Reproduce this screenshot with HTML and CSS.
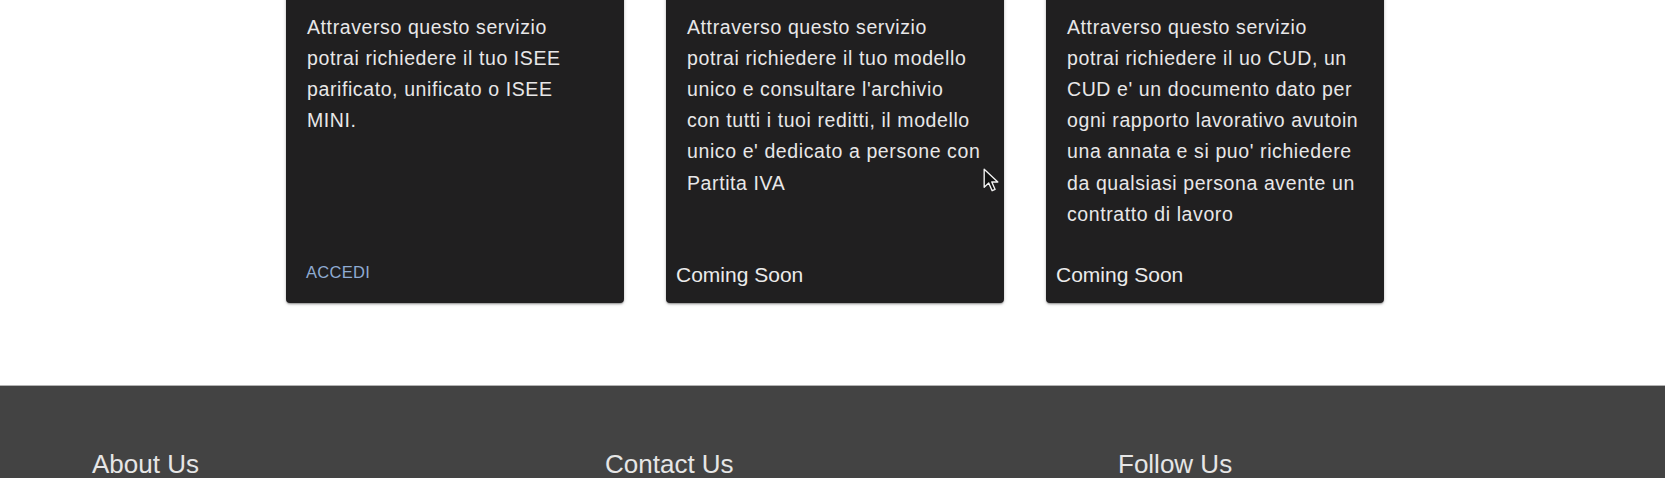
FILE: index.html
```html
<!DOCTYPE html>
<html lang="it">
<head>
<meta charset="utf-8">
<title>Servizi</title>
<link rel="stylesheet" href="styles.css">
</head>
<body>
  <main class="services">
    <div class="cards">
      <article class="card">
        <div class="card-body">
          <p class="card-text">Attraverso questo servizio<br>potrai richiedere il tuo ISEE<br>parificato, unificato o ISEE<br>MINI.</p>
        </div>
        <div class="card-actions">
          <a class="btn-text" href="#">Accedi</a>
        </div>
      </article>
      <article class="card">
        <div class="card-body">
          <p class="card-text">Attraverso questo servizio<br>potrai richiedere il tuo modello<br>unico e consultare l'archivio<br>con tutti i tuoi reditti, il modello<br>unico e' dedicato a persone con<br>Partita IVA</p>
        </div>
        <div class="card-actions">
          <span class="soon">Coming Soon</span>
        </div>
      </article>
      <article class="card">
        <div class="card-body">
          <p class="card-text">Attraverso questo servizio<br>potrai richiedere il uo CUD, un<br>CUD e' un documento dato per<br>ogni rapporto lavorativo avutoin<br>una annata e si puo' richiedere<br>da qualsiasi persona avente un<br>contratto di lavoro</p>
        </div>
        <div class="card-actions">
          <span class="soon">Coming Soon</span>
        </div>
      </article>
    </div>
  </main>
  <footer class="footer">
    <div class="footer-cols">
      <section class="footer-col"><h3 class="footer-title">About Us</h3></section>
      <section class="footer-col"><h3 class="footer-title">Contact Us</h3></section>
      <section class="footer-col"><h3 class="footer-title">Follow Us</h3></section>
    </div>
  </footer>
  <svg class="cursor" width="16" height="25" viewBox="0 0 14 22" aria-hidden="true">
    <path d="M1 1 L1 17 L5 13.2 L8 20 L10.6 18.9 L7.7 12.3 L13 12.3 Z" fill="#111" stroke="#f2f2f2" stroke-width="1.2" stroke-linejoin="round"/>
  </svg>
</body>
</html>
```

FILE: styles.css
```css
html {
  overflow: hidden;
}

body {
  margin: 0;
  background: #ffffff;
  font-family: "Liberation Sans", Arial, sans-serif;
  position: relative;
}

.services {
  margin-top: -12px;
  padding-bottom: 82px;
}

.cards {
  display: flex;
  gap: 42px;
  padding-left: 286px;
  align-items: stretch;
}

.card {
  width: 338px;
  display: flex;
  flex-direction: column;
  background: #201f20;
  border-radius: 4px;
  box-shadow: 0 2px 2px -1px rgba(0,0,0,0.25), 0 1px 2px 0 rgba(0,0,0,0.16), 0 1px 4px 0 rgba(0,0,0,0.14);
}

.card-body {
  flex: 1;
  padding: 23.5px 8px 33.1px 21px;
}

.card-text {
  margin: 0;
  font-family: "Liberation Sans", Arial, sans-serif;
  font-size: 19.5px;
  line-height: 31.2px;
  letter-spacing: 0.6px;
  color: #e8e7e8;
  white-space: nowrap;
}

.card-actions {
  display: flex;
  align-items: flex-end;
  padding: 0 9px 16px 10px;
}

.btn-text {
  display: inline-block;
  padding: 0 10px 3px;
  font-family: "Liberation Sans", Arial, sans-serif;
  font-size: 16.5px;
  line-height: 24px;
  letter-spacing: 0.3px;
  text-transform: uppercase;
  text-decoration: none;
  color: #8fabd2;
}

.soon {
  font-family: "Liberation Sans", Arial, sans-serif;
  font-size: 21px;
  line-height: 24px;
  color: #ebebeb;
}

.footer {
  background: #434343;
  border-top: 1px solid #b3b3b3;
  padding: 63px 0 40px;
}

.footer-cols {
  display: grid;
  grid-template-columns: repeat(3, 513px);
  padding-left: 92px;
}

.footer-title {
  margin: 0;
  font-family: "Liberation Sans", Arial, sans-serif;
  font-size: 26px;
  line-height: 1.2;
  font-weight: 400;
  color: #e6e6e6;
}

.cursor {
  position: absolute;
  top: 168px;
  left: 983px;
}
```
